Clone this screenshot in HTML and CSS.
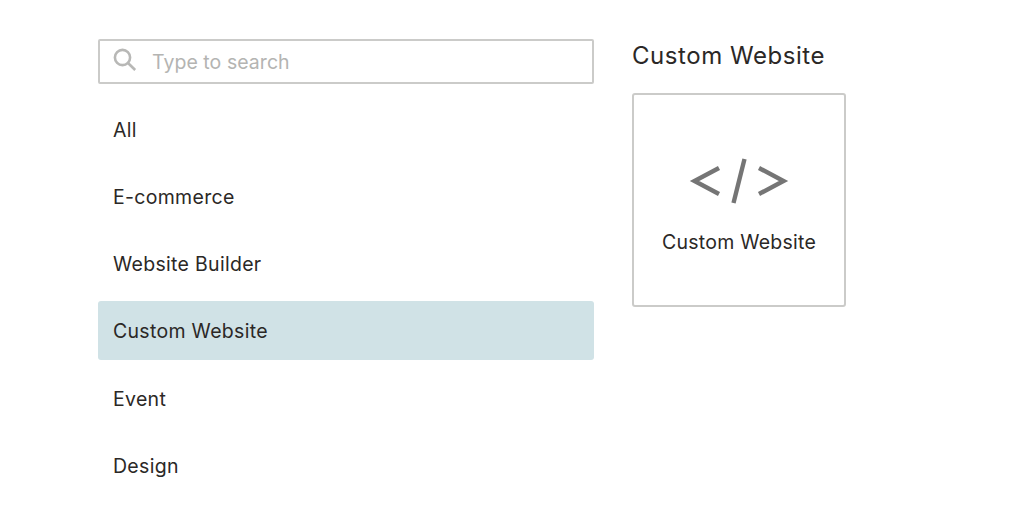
FILE: index.html
```html
<!DOCTYPE html>
<html lang="en">
<head>
<meta charset="utf-8">
<title>Custom Website</title>
<link rel="stylesheet" href="styles.css">
</head>
<body>
<main class="page">
  <section class="left">
    <div class="search">
      <svg class="search-icon" width="24" height="24" viewBox="0 0 24 24" fill="none" stroke="#b8b8b6" stroke-width="2.6">
        <circle cx="9.5" cy="9.5" r="7.6"/>
        <path d="M15 15l7.2 7"/>
      </svg>
      <span class="placeholder">Type to search</span>
    </div>
    <ul class="cats">
      <li class="cat">All</li>
      <li class="cat">E-commerce</li>
      <li class="cat">Website Builder</li>
      <li class="cat selected">Custom Website</li>
      <li class="cat">Event</li>
      <li class="cat">Design</li>
    </ul>
  </section>
  <section class="right">
    <h2 class="title">Custom Website</h2>
    <div class="card">
      <svg class="code-icon" width="100" height="46" viewBox="0 0 100 46" fill="none" stroke="#757575" stroke-width="4.4">
        <path d="M30 10L5.500 23L30 36"/>
        <path d="M55.500 1L44.500 45"/>
        <path d="M70 10L94.500 23L70 36"/>
      </svg>
      <span class="card-label">Custom Website</span>
    </div>
  </section>
</main>
</body>
</html>
```

FILE: styles.css
```css
* { box-sizing: border-box; }
html, body { margin: 0; padding: 0; background: #fff; }
body {
  font-family: "Inter", "Liberation Sans", sans-serif;
  color: #2b2826;
  overflow: hidden;
}
.page {
  display: flex;
  gap: 38px;
  padding: 39px 0 0 98px;
}
.left { width: 496px; }
.search {
  display: flex;
  align-items: center;
  height: 45px;
  border: 2px solid #cbcbc9;
  border-radius: 2px;
  padding-left: 13px;
}
.search-icon { flex: none; margin-right: 15px; margin-top: -3px; }
.placeholder { font-size: 19.500px; color: #b4b4b2; letter-spacing: 0.05px; }
.cats {
  list-style: none;
  margin: 15px 0 0;
  padding: 0;
  display: flex;
  flex-direction: column;
  gap: 8.300px;
}
.cat {
  display: flex;
  align-items: center;
  height: 59px;
  padding: 2px 0 0 15px;
  border-radius: 3px;
  font-size: 19.500px;
  letter-spacing: 0.3px;
}
.selected { background: #d0e2e6; }
.right { width: 214px; }
.title {
  margin: 0;
  font-size: 24px;
  font-weight: 400;
  line-height: 33px;
  letter-spacing: 0.55px;
}
.card {
  display: flex;
  flex-direction: column;
  align-items: center;
  width: 214px;
  height: 214px;
  margin-top: 21px;
  padding-top: 63px;
  border: 2px solid #cbcbc9;
  border-radius: 3px;
}
.code-icon { flex: none; }
.card-label { margin-top: 26px; font-size: 19.500px; letter-spacing: 0.25px; }
```
